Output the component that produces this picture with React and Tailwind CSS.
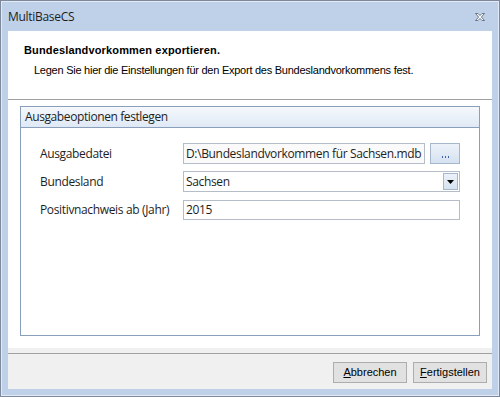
import React from "react";

const seg = { fontFamily: '"Open Sans", "Noto Sans", sans-serif' };
const ms = { fontFamily: '"Liberation Sans", Arial, sans-serif' };

function CloseIcon() {
  return (
    <svg width="12" height="10" viewBox="0 0 12 10">
      <path
        d="M1.5 1.5 H4 L6 3.6 L8 1.5 H10.5 L7.4 5 L10.5 8.5 H8 L6 6.4 L4 8.5 H1.5 L4.6 5 Z"
        fill="#ffffff"
        stroke="#6b7789"
        strokeWidth="1"
        strokeLinejoin="round"
      />
    </svg>
  );
}

export default function App() {
  return (
    <div className="w-[500px] h-[397px] border border-[#7d899b] bg-[#bfd1e9]">
      <div className="h-full border border-[#e3eaf4] flex flex-col">
        {/* title bar */}
        <div className="h-[29px] flex items-center justify-between pl-[6px] pr-[12px]">
          <span className="text-[12px] text-[#1e1e1e] leading-none tracking-[-0.3px] pt-[1px]" style={seg}>
            MultiBaseCS
          </span>
          <div className="pt-[1px]">
            <CloseIcon />
          </div>
        </div>
        {/* client */}
        <div className="flex-1 mx-[6px] mb-[6px] flex flex-col bg-white">
          {/* header */}
          <div className="h-[69px] pl-[16px] pt-[13px] border-b border-[#a0a0a0]" style={ms}>
            <div className="text-[11px] font-bold leading-[13px] text-black tracking-[0.15px]">
              Bundeslandvorkommen exportieren.
            </div>
            <div className="text-[11px] leading-[13px] text-black pl-[10px] mt-[7px] tracking-[-0.25px] whitespace-nowrap">
              Legen Sie hier die Einstellungen für den Export des Bundeslandvorkommens fest.
            </div>
          </div>
          {/* body */}
          <div className="flex-1 px-[12px] pt-[6px] pb-[12px]">
            <div className="h-full border border-[#8a9fba] flex flex-col">
              <div
                className="h-[21px] border-b border-[#8a9fba] bg-gradient-to-b from-[#f5f8fc] to-[#dfe9f5] flex items-center pl-[4px]"
                style={seg}
              >
                <span className="text-[12px] text-[#1e1e1e] tracking-[-0.4px] leading-none whitespace-nowrap">
                  Ausgabeoptionen festlegen
                </span>
              </div>
              <div
                className="flex flex-col pl-[19px] pr-[19px] pt-[15px] gap-[7px] text-[12px] text-[#1e1e1e] tracking-[-0.35px] whitespace-nowrap"
                style={seg}
              >
                <div className="flex items-center h-[21px]">
                  <div className="w-[143px] shrink-0">Ausgabedatei</div>
                  <div className="flex-1 min-w-0 flex gap-[5px] h-full">
                    <div className="flex-1 min-w-0 overflow-hidden h-full border border-[#b5bdc8] bg-[#fafafa] flex items-center pl-[2px] leading-none">
                      D:\Bundeslandvorkommen für Sachsen.mdb
                    </div>
                    <div className="w-[30px] shrink-0 h-full border border-[#a6b6cb] bg-gradient-to-b from-[#edf2f9] to-[#d6e2f1] flex items-end justify-center pb-[5px]">
                      <div className="flex gap-[2px]">
                        <span className="w-[1px] h-[2px] bg-[#3b63b0]" />
                        <span className="w-[1px] h-[2px] bg-[#3b63b0]" />
                        <span className="w-[1px] h-[2px] bg-[#3b63b0]" />
                      </div>
                    </div>
                  </div>
                </div>
                <div className="flex items-center h-[21px]">
                  <div className="w-[143px] shrink-0">Bundesland</div>
                  <div className="flex-1 h-full border border-[#b5bdc8] bg-white flex items-center justify-between pl-[2px] pr-[1px]">
                    <span className="leading-none">Sachsen</span>
                    <div className="w-[15px] h-[17px] border border-[#a6b6cb] bg-gradient-to-b from-[#edf2f9] to-[#d6e2f1] flex items-center justify-center">
                      <svg width="7" height="4" viewBox="0 0 7 4">
                        <path d="M0 0 H7 L3.5 4 Z" fill="#000" />
                      </svg>
                    </div>
                  </div>
                </div>
                <div className="flex items-center h-[20px] mt-[1px]">
                  <div className="w-[143px] shrink-0">Positivnachweis ab (Jahr)</div>
                  <div className="flex-1 h-full border border-[#b5bdc8] bg-white flex items-center pl-[2px] leading-none">
                    2015
                  </div>
                </div>
              </div>
            </div>
          </div>
          {/* footer */}
          <div className="h-[5px] bg-[#f0f0f0] border-b border-[#a0a0a0] box-content" />
          <div className="h-[35px] bg-[#f0f0f0] flex justify-end items-start pt-[8px] pr-[5px] gap-[6px]" style={ms}>
            <button className="w-[74px] h-[21px] border border-[#adadad] bg-[#e1e1e1] text-[11px] text-black leading-none">
              <span className="underline underline-offset-[1px]">A</span>bbrechen
            </button>
            <button className="w-[74px] h-[21px] border border-[#adadad] bg-[#e1e1e1] text-[11px] text-black leading-none">
              <span className="underline underline-offset-[1px]">F</span>ertigstellen
            </button>
          </div>
        </div>
      </div>
    </div>
  );
}
